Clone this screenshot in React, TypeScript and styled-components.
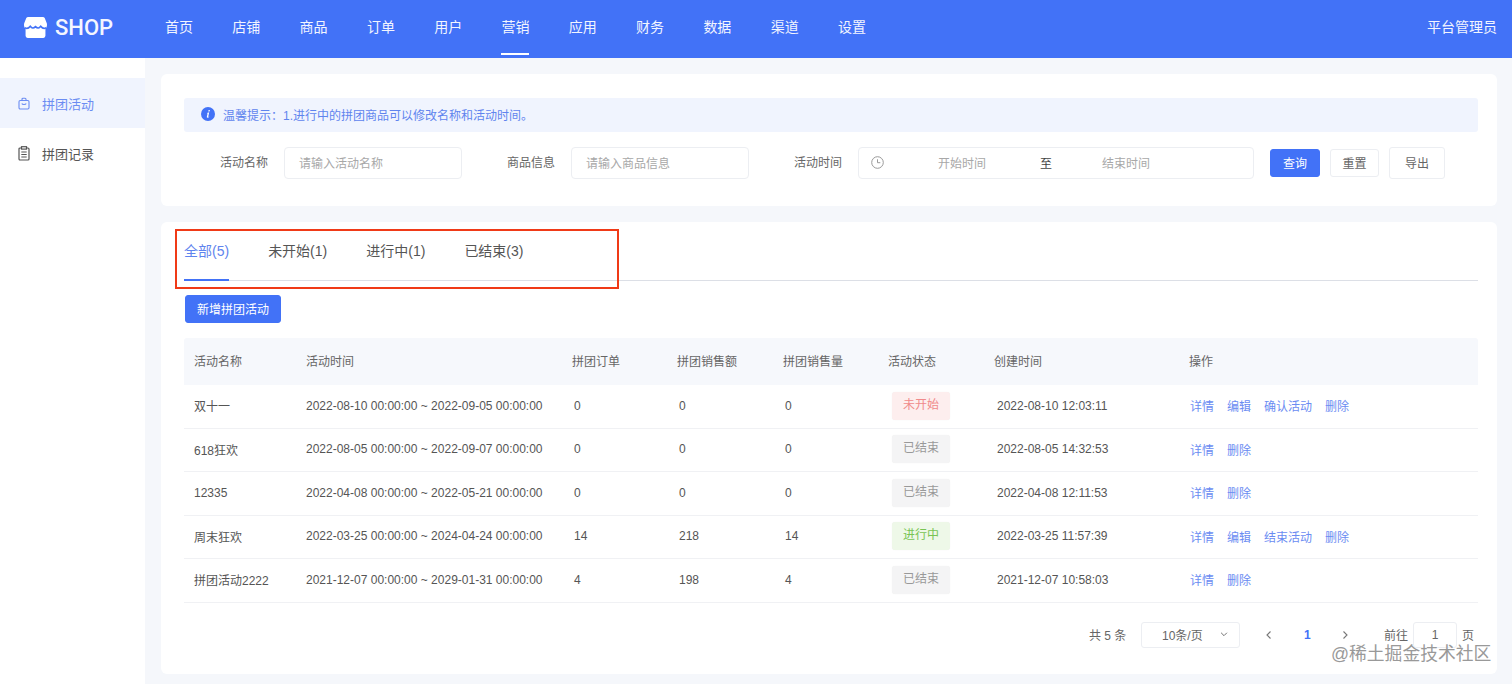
import React from 'react';
import styled, { createGlobalStyle } from 'styled-components';

const Global = createGlobalStyle`
  html, body { margin: 0; padding: 0; width: 1512px; height: 684px; overflow: hidden; background: #f5f7fb; }
  body { font-family: "Liberation Sans", "Noto Sans CJK SC", sans-serif; color: #555; }
  * { box-sizing: border-box; }
`;

const Page = styled.div`
  position: relative;
  width: 1512px;
  height: 684px;
  overflow: hidden;
  display: flex;
  flex-direction: column;
`;
const Header = styled.header`
  height: 58px;
  flex: none;
  background: #4272f7;
  display: flex;
  align-items: stretch;
  padding: 0 15px 0 24px;
  color: #fff;
`;
const Brand = styled.div`
  width: 141px;
  display: flex;
  align-items: center;
  gap: 8px;
  padding-bottom: 3px;
  font: 500 22px Roboto, sans-serif;
  color: #f4f6ff;
`;
const Nav = styled.nav`
  display: flex;
  gap: 39.3px;
  flex: 1;
`;
const NavItem = styled.div<{ $active?: boolean }>`
  width: 28px;
  height: 55px;
  white-space: nowrap;
  font-size: 14px;
  line-height: 54px;
  color: #f2f5ff;
  border-bottom: 2px solid ${p => (p.$active ? '#fff' : 'transparent')};
`;
const UserName = styled.div`
  font-size: 14px;
  line-height: 54px;
  color: #f2f5ff;
`;
const Body = styled.div`
  flex: 1;
  display: flex;
  min-height: 0;
`;
const Sidebar = styled.aside`
  width: 145px;
  flex: none;
  background: #fff;
  padding-top: 20px;
`;
const SideItem = styled.div<{ $active?: boolean }>`
  height: 50px;
  display: flex;
  align-items: center;
  gap: 12px;
  padding-left: 18px;
  font-size: 13px;
  color: ${p => (p.$active ? '#6b8cf2' : '#555')};
  background: ${p => (p.$active ? '#f0f4fe' : 'transparent')};
`;
const Main = styled.main`
  flex: 1;
  padding: 16px 15px 0 16px;
  display: flex;
  flex-direction: column;
  gap: 16px;
`;
const Card = styled.section`
  background: #fff;
  border-radius: 6px;
  padding: 24px 19px 0 23px;
`;
const FilterCard = styled(Card)`
  height: 132px;
`;
const Alert = styled.div`
  height: 34px;
  background: #f0f4fe;
  border-radius: 3px;
  display: flex;
  align-items: center;
  gap: 8px;
  padding: 0 0 2px 17px;
  font-size: 12px;
  color: #5f84ee;
`;
const FormRow = styled.div`
  display: flex;
  align-items: center;
  margin-top: 15px;
  padding-left: 36px;
`;
const Label = styled.label<{ $gap?: number }>`
  font-size: 12px;
  line-height: 14px;
  color: #666;
  width: 48px;
  flex: none;
  white-space: nowrap;
  margin-left: ${p => p.$gap ?? 0}px;
`;
const FakeInput = styled.div`
  margin-left: 16px;
  width: 178px;
  height: 32px;
  border: 1px solid #eceef2;
  border-radius: 4px;
  padding: 0 0 2px 14px;
  display: flex;
  align-items: center;
  font-size: 12px;
  color: #a8a8a8;
  white-space: nowrap;
`;
const DateRange = styled.div`
  margin-left: 16px;
  width: 396px;
  height: 32px;
  border: 1px solid #eceef2;
  border-radius: 4px;
  display: flex;
  align-items: center;
  padding: 0 0 2px 12px;
  font-size: 12px;
  color: #a8a8a8;
`;
const DateText = styled.span<{ $left: number }>`
  margin-left: ${p => p.$left}px;
  white-space: nowrap;
`;
const DateSep = styled.span<{ $left: number }>`
  margin-left: ${p => p.$left}px;
  color: #444;
`;
const Button = styled.button<{ $w: number; $h?: number; $left?: number }>`
  flex: none;
  width: ${p => p.$w}px;
  height: ${p => p.$h ?? 28}px;
  margin-left: ${p => p.$left ?? 10}px;
  padding: 0 0 2px;
  border: 1px solid #eceef2;
  border-radius: 3px;
  background: #fff;
  color: #666;
  font: 12px "Liberation Sans", "Noto Sans CJK SC", sans-serif;
`;
const PrimaryButton = styled(Button)`
  background: #4272f7;
  border-color: #4272f7;
  color: #fff;
`;
const ListCard = styled(Card)`
  position: relative;
  height: 452px;
  padding-top: 0;
`;
const Tabs = styled.div`
  height: 59px;
  display: flex;
  gap: 39px;
  border-bottom: 1px solid #dcdfe6;
`;
const Tab = styled.div<{ $active?: boolean }>`
  height: 59px;
  padding-top: 20px;
  font-size: 14px;
  line-height: 18px;
  white-space: nowrap;
  color: ${p => (p.$active ? '#5f84ee' : '#555')};
  border-bottom: 2px solid ${p => (p.$active ? '#4272f7' : 'transparent')};
`;
const Highlight = styled.div`
  position: absolute;
  left: 14px;
  top: 7px;
  width: 444px;
  height: 60px;
  border: 2px solid #f03a17;
  pointer-events: none;
`;
const Actions = styled.div`
  margin-top: 14px;
  height: 28px;
`;
const Table = styled.div`
  margin-top: 15px;
  font-size: 12px;
  color: #555;
`;
const Row = styled.div<{ $head?: boolean; $h?: number }>`
  display: grid;
  grid-template-columns: 112px 266px 105px 106px 105px 106px 195px 1fr;
  align-items: center;
  height: ${p => p.$h ?? 44}px;
  background: ${p => (p.$head ? '#f6f8fc' : '#fff')};
  border-bottom: ${p => (p.$head ? '0' : '1px solid #f0f1f4')};
  padding: 0 0 ${p => (p.$head ? 3 : 2)}px 10px;
  border-radius: ${p => (p.$head ? '3px 3px 0 0' : '0')};
`;
const Cell = styled.div<{ $pad?: number }>`
  padding-left: ${p => p.$pad ?? 0}px;
  white-space: nowrap;
`;
const HeadCell = styled(Cell)`
  color: #666;
`;
const tagColors = {
  wait: ['#fdeeee', '#f08a8a'],
  done: ['#f4f4f5', '#999'],
  run: ['#eef8e8', '#78c453'],
};
const Tag = styled.span<{ $kind: keyof typeof tagColors }>`
  display: inline-block;
  vertical-align: middle;
  margin-left: 4px;
  width: 58px;
  height: 28px;
  line-height: 27px;
  text-align: center;
  border-radius: 3px;
  background: ${p => tagColors[p.$kind][0]};
  color: ${p => tagColors[p.$kind][1]};
  box-shadow: 0 0 1px rgba(0, 0, 0, 0.08);
`;
const Links = styled.div`
  display: flex;
  gap: 13px;
  color: #6b8cf2;
  white-space: nowrap;
`;
const Pager = styled.div`
  margin-top: 19px;
  height: 26px;
  display: flex;
  align-items: center;
  padding-left: 905px;
  font-size: 12px;
  color: #666;
`;
const Total = styled.span`
  width: 52px;
  white-space: nowrap;
  margin-bottom: 2px;
`;
const PageSelect = styled.div`
  width: 99px;
  height: 26px;
  border: 1px solid #eceef2;
  border-radius: 3px;
  display: flex;
  align-items: center;
  justify-content: space-between;
  padding: 0 10px 2px 20px;
`;
const PagerIcon = styled.span<{ $left: number }>`
  display: flex;
  margin-left: ${p => p.$left}px;
  color: #777;
`;
const PageNum = styled.b`
  margin-left: 29px;
  width: 6px;
  color: #4272f7;
  font-weight: 700;
  margin-bottom: 1px;
`;
const Goto = styled.span`
  margin: 0 0 2px 33px;
  white-space: nowrap;
`;
const GotoInput = styled.div`
  margin-left: 5px;
  width: 44px;
  height: 26px;
  border: 1px solid #eceef2;
  border-radius: 3px;
  text-align: center;
  line-height: 24px;
`;
const PageSuffix = styled.span`
  margin: 0 0 2px 5px;
`;
const Watermark = styled.div`
  position: absolute;
  left: 1331px;
  top: 643px;
  font-size: 17.8px;
  line-height: 22px;
  color: #999;
  text-shadow: 0 0 2px #fff;
  white-space: nowrap;
`;

const Logo = () => (
  <svg width="23" height="21" viewBox="0 0 22 20" fill="#fff">
    <path d="M4 0h14a2 2 0 0 1 1.800 1l2 5c.5 2 0 4-1.300 5v7a2 2 0 0 1-2 2H3.500a2 2 0 0 1-2-2v-7C.2 10-.3 8 .2 6l2-5A2 2 0 0 1 4 0z" />
    <path d="M.8 10.200c2.200 1.500 3.700.6 5.200-1.400 1.500 1.900 3 2.300 5 .4 2 1.900 3.500 1.500 5-.4 1.500 2 3 2.900 5.200 1.400" stroke="#4272f7" strokeWidth="1.500" fill="none" />
  </svg>
);
const BagIcon = () => (
  <svg width="12" height="13" viewBox="0 0 12 13" fill="none" stroke="#6b8cf2" strokeWidth="1.100">
    <rect x="1" y="3.500" width="10" height="8.500" rx="1.200" />
    <path d="M4 3.500V2.200a1 1 0 0 1 1-1h2a1 1 0 0 1 1 1v1.300" />
    <path d="M3.800 6.500c.5 1.400 3.900 1.400 4.400 0" />
  </svg>
);
const NoteIcon = () => (
  <svg width="12" height="15" viewBox="0 0 12 15" fill="none" stroke="#555" strokeWidth="1.200">
    <rect x="1" y="2" width="10" height="12" rx="1" />
    <rect x="3.500" y=".7" width="5" height="2.400" fill="#fff" />
    <path d="M3.300 6h5.400M3.300 8.500h5.400M3.300 11h5.400" />
  </svg>
);
const InfoIcon = () => (
  <svg width="14" height="14" viewBox="0 0 14 14">
    <circle cx="7" cy="7" r="7" fill="#4272f7" />
    <path d="M7.600 3h1.300l-.3 1.400H7.300zM6.900 5.600h1.300l-1 4.200c0 .2.300.2.900-.2l.1.500c-1 .8-2.500 1-2.400 0l.8-3.700-.8.100z" fill="#fff" />
  </svg>
);
const ClockIcon = () => (
  <svg width="13" height="13" viewBox="0 0 13 13" fill="none" stroke="#999" strokeWidth="1">
    <circle cx="6.500" cy="6.500" r="5.800" />
    <path d="M6.500 3.300v3.400h2.800" />
  </svg>
);
const Chevron = ({ d, size = 12 }: { d: string; size?: number }) => (
  <svg width={size} height={size} viewBox="0 0 12 12" fill="none" stroke="currentColor" strokeWidth="1.100">
    <path d={d} />
  </svg>
);

const navs = ['首页', '店铺', '商品', '订单', '用户', '营销', '应用', '财务', '数据', '渠道', '设置'];
const rows = [
  { name: '双十一', time: '2022-08-10 00:00:00 ~ 2022-09-05 00:00:00', o: '0', a: '0', q: '0', kind: 'wait', s: '未开始', c: '2022-08-10 12:03:11', l: ['详情', '编辑', '确认活动', '删除'], h: 44 },
  { name: '618狂欢', time: '2022-08-05 00:00:00 ~ 2022-09-07 00:00:00', o: '0', a: '0', q: '0', kind: 'done', s: '已结束', c: '2022-08-05 14:32:53', l: ['详情', '删除'], h: 43 },
  { name: '12335', time: '2022-04-08 00:00:00 ~ 2022-05-21 00:00:00', o: '0', a: '0', q: '0', kind: 'done', s: '已结束', c: '2022-04-08 12:11:53', l: ['详情', '删除'], h: 44 },
  { name: '周末狂欢', time: '2022-03-25 00:00:00 ~ 2024-04-24 00:00:00', o: '14', a: '218', q: '14', kind: 'run', s: '进行中', c: '2022-03-25 11:57:39', l: ['详情', '编辑', '结束活动', '删除'], h: 43 },
  { name: '拼团活动2222', time: '2021-12-07 00:00:00 ~ 2029-01-31 00:00:00', o: '4', a: '198', q: '4', kind: 'done', s: '已结束', c: '2021-12-07 10:58:03', l: ['详情', '删除'], h: 44 },
] as const;

export default function App() {
  return (
    <Page>
      <Global />
      <Header>
        <Brand><Logo />SHOP</Brand>
        <Nav>
          {navs.map(n => <NavItem key={n} $active={n === '营销'}>{n}</NavItem>)}
        </Nav>
        <UserName>平台管理员</UserName>
      </Header>
      <Body>
        <Sidebar>
          <SideItem $active><BagIcon />拼团活动</SideItem>
          <SideItem><NoteIcon />拼团记录</SideItem>
        </Sidebar>
        <Main>
          <FilterCard>
            <Alert><InfoIcon />温馨提示：1.进行中的拼团商品可以修改名称和活动时间。</Alert>
            <FormRow>
              <Label>活动名称</Label>
              <FakeInput>请输入活动名称</FakeInput>
              <Label $gap={45}>商品信息</Label>
              <FakeInput>请输入商品信息</FakeInput>
              <Label $gap={45}>活动时间</Label>
              <DateRange>
                <ClockIcon />
                <DateText $left={54}>开始时间</DateText>
                <DateSep $left={54}>至</DateSep>
                <DateText $left={50}>结束时间</DateText>
              </DateRange>
              <PrimaryButton $w={50} $left={16}>查询</PrimaryButton>
              <Button $w={49}>重置</Button>
              <Button $w={56} $h={32}>导出</Button>
            </FormRow>
          </FilterCard>
          <ListCard>
            <Tabs>
              <Tab $active>全部(5)</Tab>
              <Tab>未开始(1)</Tab>
              <Tab>进行中(1)</Tab>
              <Tab>已结束(3)</Tab>
            </Tabs>
            <Highlight />
            <Actions><PrimaryButton $w={96} $left={1}>新增拼团活动</PrimaryButton></Actions>
            <Table>
              <Row $head $h={47}>
                {['活动名称', '活动时间', '拼团订单', '拼团销售额', '拼团销售量', '活动状态', '创建时间', '操作'].map(h => <HeadCell key={h}>{h}</HeadCell>)}
              </Row>
              {rows.map(r => (
                <Row key={r.c} $h={r.h}>
                  <Cell>{r.name}</Cell>
                  <Cell>{r.time}</Cell>
                  <Cell $pad={2}>{r.o}</Cell>
                  <Cell $pad={2}>{r.a}</Cell>
                  <Cell $pad={2}>{r.q}</Cell>
                  <Cell><Tag $kind={r.kind}>{r.s}</Tag></Cell>
                  <Cell $pad={3}>{r.c}</Cell>
                  <Cell $pad={1}><Links>{r.l.map(x => <span key={x}>{x}</span>)}</Links></Cell>
                </Row>
              ))}
            </Table>
            <Pager>
              <Total>共 5 条</Total>
              <PageSelect>10条/页<Chevron d="M2.500 4.500 6 8l3.500-3.500" size={10} /></PageSelect>
              <PagerIcon $left={23}><Chevron d="M7.500 2.500 4 6l3.500 3.500" /></PagerIcon>
              <PageNum>1</PageNum>
              <PagerIcon $left={29}><Chevron d="M4.500 2.500 8 6l-3.500 3.500" /></PagerIcon>
              <Goto>前往</Goto>
              <GotoInput>1</GotoInput>
              <PageSuffix>页</PageSuffix>
            </Pager>
          </ListCard>
        </Main>
      </Body>
      <Watermark>@稀土掘金技术社区</Watermark>
    </Page>
  );
}
